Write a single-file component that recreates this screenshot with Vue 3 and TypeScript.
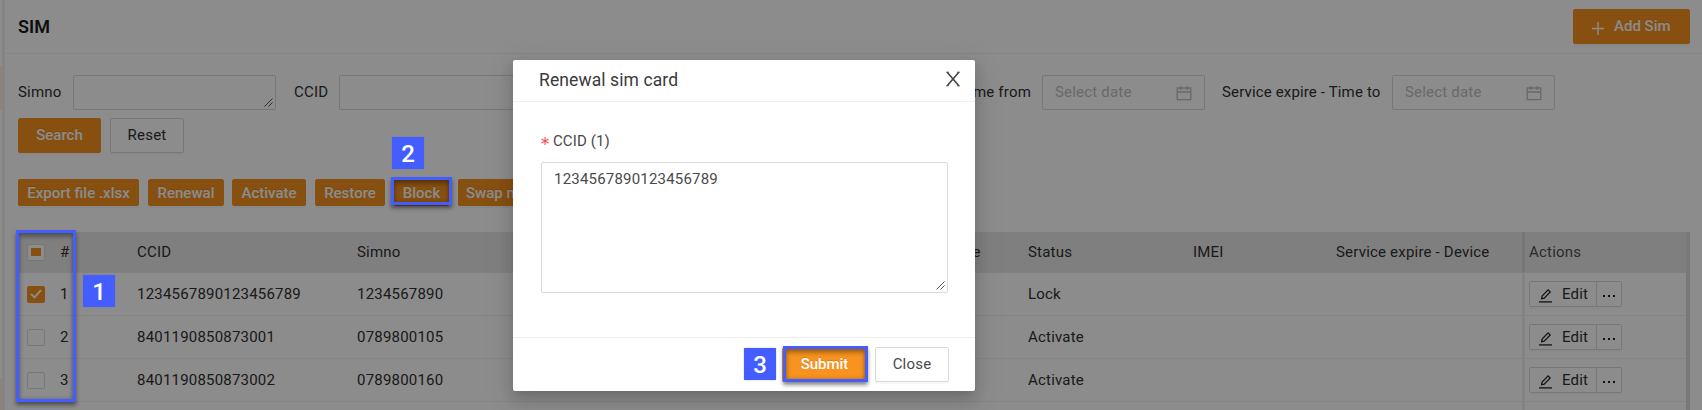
<script setup lang="ts">
interface SimRow {
  id: number
  ccid: string
  simno: string
  status: string
  checked: boolean
}

const bulkActions = [
  { label: 'Export file .xlsx', cls: 'b-export' },
  { label: 'Renewal', cls: 'b-renewal' },
  { label: 'Activate', cls: 'b-activate' },
  { label: 'Restore', cls: 'b-restore' },
  { label: 'Block', cls: 'b-block' },
  { label: 'Swap number', cls: 'b-swap' },
]

const rows: SimRow[] = [
  { id: 1, ccid: '1234567890123456789', simno: '1234567890', status: 'Lock', checked: true },
  { id: 2, ccid: '8401190850873001', simno: '0789800105', status: 'Activate', checked: false },
  { id: 3, ccid: '8401190850873002', simno: '0789800160', status: 'Activate', checked: false },
]
</script>

<template>
  <div class="screen">
    <aside class="rail"><i class="rail-active"></i><i class="rail-next"></i></aside>
    <main class="page">
      <header class="page-head">
        <h1>SIM</h1>
        <button class="btn primary add">
          <svg width="12" height="13" viewBox="0 0 12 13"><path d="M6 0v13M0 6.5h12" stroke="currentColor" stroke-width="1.4" /></svg>
          <span>Add Sim</span>
        </button>
      </header>

      <section class="filters">
        <label class="l-simno">Simno</label>
        <div class="field f-simno">
          <svg class="grip" width="9" height="9" viewBox="0 0 9 9"><path d="M.5 8.5l8-8M4.5 8.5l4-4" /></svg>
        </div>
        <label class="l-ccid">CCID</label>
        <div class="field f-ccid"></div>
        <label class="l-from">Service expire - Time from</label>
        <div class="field date"><span>Select date</span>
          <svg width="16" height="16" viewBox="0 0 16 16"><path d="M1.2 3h13.6v11.6H1.2zM1.2 7h13.6M4.8 1v4M11.2 1v4" /></svg>
        </div>
        <label class="l-to">Service expire - Time to</label>
        <div class="field date"><span>Select date</span>
          <svg width="16" height="16" viewBox="0 0 16 16"><path d="M1.2 3h13.6v11.6H1.2zM1.2 7h13.6M4.8 1v4M11.2 1v4" /></svg>
        </div>
      </section>

      <section class="search-row">
        <button class="btn primary search">Search</button>
        <button class="btn reset">Reset</button>
      </section>

      <section class="bulk">
        <button v-for="a in bulkActions" :key="a.label" class="btn primary small" :class="a.cls">{{ a.label }}</button>
      </section>

      <section class="table">
        <div class="tr th">
          <div class="c-check"><span class="box half"></span></div>
          <div>#</div><div>CCID</div><div>Simno</div><div class="c-type">Device type</div>
          <div>Status</div><div>IMEI</div><div>Service expire - Device</div>
          <div class="c-act head">Actions</div>
        </div>
        <div v-for="r in rows" :key="r.id" class="tr">
          <div class="c-check">
            <span class="box" :class="{ on: r.checked }">
              <svg v-if="r.checked" width="12" height="10" viewBox="0 0 12 10"><path d="M1 4.9l3.5 3.5L11 1.2" fill="none" stroke="#fff" stroke-width="2" /></svg>
            </span>
          </div>
          <div>{{ r.id }}</div><div>{{ r.ccid }}</div><div>{{ r.simno }}</div><div></div>
          <div>{{ r.status }}</div><div></div><div></div>
          <div class="c-act">
            <div class="group">
              <button class="edit">
                <svg width="15" height="15" viewBox="0 0 15 15"><path d="M1 13.9h13" stroke-width="1.3" /><path d="M3.6 10.7l.5-2.7 6-6.1 2.1 2.1-6 6.1z" stroke-width="1.2" /></svg>
                <span>Edit</span>
              </button>
              <button class="more"><i></i><i></i><i></i></button>
            </div>
          </div>
        </div>
        <div class="tr tail"><div></div><div></div><div></div><div></div><div></div><div></div><div></div><div></div><div class="c-act"></div></div>
      </section>
    </main>

    <div class="mask"></div>

    <div class="modal" role="dialog">
      <header class="modal-head">
        <h2>Renewal sim card</h2>
        <svg width="14" height="16" viewBox="0 0 14 16"><path d="M1.2 1.2l11.6 13.6M12.8 1.2l-11.6 13.6" stroke="#444" stroke-width="1.6" /><path d="M0 1.2h3M11 1.2h3M0 14.8h3M11 14.8h3" stroke="#444" stroke-width=".8" /></svg>
      </header>
      <div class="modal-body">
        <div class="modal-label">
          <svg width="8" height="8" viewBox="0 0 8 8"><path d="M4 0v8M.5 2l7 4M7.5 2l-7 4" stroke="#ff4d4f" stroke-width="1.1" /></svg>
          <span>CCID (1)</span>
        </div>
        <div class="area">1234567890123456789
          <svg class="grip" width="9" height="9" viewBox="0 0 9 9"><path d="M.5 8.5l8-8M4.5 8.5l4-4" /></svg>
        </div>
      </div>
      <footer class="modal-foot">
        <button class="btn primary submit">Submit</button>
        <button class="btn close">Close</button>
      </footer>
    </div>

    <div class="mark mark-1"></div>
    <div class="mark mark-2"></div>
    <div class="mark mark-3"></div>
    <div class="tag tag-1">1</div>
    <div class="tag tag-2">2</div>
    <div class="tag tag-3">3</div>
  </div>
</template>

<style>
body { margin: 0; overflow: hidden; }
</style>

<style scoped>
* { box-sizing: border-box; }
.screen {
  position: relative;
  width: 1702px;
  height: 410px;
  overflow: hidden;
  display: flex;
  background: #fff;
  color: #303030;
  font: 15px/24px Roboto, sans-serif;
  letter-spacing: .2px;
}
.rail { width: 5px; border-right: 3px solid #f0f0f0; background: #fff; display: flex; flex-direction: column; }
.rail i { width: 2px; background: #ffefdc; }
.rail-active { height: 44px; margin-top: 66px; }
.rail-next { height: 32px; margin-top: 268px; }
.page { width: 1697px; flex: none; }
.page-head {
  height: 54px;
  display: flex;
  justify-content: space-between;
  padding: 9px 12px 0 13px;
  border-bottom: 1px solid #f0f0f0;
}
h1 { margin: 0; font-size: 18px; line-height: 36px; font-weight: 600; letter-spacing: 0; color: #1a1a1a; }
button { font: inherit; letter-spacing: inherit; margin: 0; padding: 0; color: inherit; background: #fff; }
.btn {
  height: 35px;
  flex: none;
  border: 1px solid #d9d9d9;
  border-radius: 2px;
  text-align: center;
  line-height: 33px;
  box-shadow: 0 2px 0 rgba(0, 0, 0, .03);
  white-space: nowrap;
}
.primary { color: #fff; background: #f7931e; border-color: #f7931e; text-shadow: 0 -1px 0 rgba(0, 0, 0, .12); font-weight: 500; letter-spacing: 0; }
.add { width: 117px; display: flex; align-items: center; gap: 10px; padding-left: 18px; }
.add svg { margin-top: 3px; }
.filters { display: flex; align-items: center; height: 35px; margin: 21px 0 0 13px; }
label { white-space: nowrap; flex: none; margin-top: -1px; }
.l-simno { width: 55px; }
.field { position: relative; height: 35px; flex: none; border: 1px solid #d9d9d9; border-radius: 2px; }
.f-simno { width: 203px; margin-right: 18px; }
.l-ccid { width: 45px; }
.f-ccid { width: 203px; }
.l-from { width: 500px; text-align: right; padding-right: 11px; }
.date { width: 163px; display: flex; justify-content: space-between; align-items: center; padding: 0 12px; color: #bfbfbf; }
.date span { margin-top: -1px; }
.date svg { fill: none; stroke: #bfbfbf; stroke-width: 1.3; margin-top: 1px; }
.l-to { width: 187px; padding-left: 17px; letter-spacing: .15px; }
.grip { position: absolute; right: 2px; bottom: 2px; fill: none; stroke: #555; stroke-width: 1; }
.search-row { display: flex; gap: 9px; margin: 8px 0 0 13px; }
.search { width: 83px; }
.reset { width: 74px; }
.bulk { display: flex; margin: 26px 0 0 13px; height: 27px; }
.small { height: 27px; line-height: 26px; }
.b-export { width: 121px; margin-right: 9px; }
.b-renewal { width: 76px; margin-right: 8px; }
.b-activate { width: 74px; margin-right: 9px; }
.b-restore { width: 70px; margin-right: 9px; }
.b-block { width: 55px; margin-right: 9px; }
.b-swap { width: 108px; }
.table { width: 1672px; margin: 26px 0 0 13px; border-right: 4px solid #dcdcdc; }
.tr {
  display: grid;
  grid-template-columns: 42px 77px 220px 460px 211px 165px 143px 186px 164px;
  height: 43px;
  line-height: 42px;
  border-bottom: 1px solid #f0f0f0;
  white-space: nowrap;
}
.th { height: 41px; line-height: 40px; background: #e8e8e8; border-bottom-color: #ececec; }
.th .c-type { padding-left: 85px; }
.tail { border: 0; height: 10px; }
.c-act { border-left: 3px solid #efefef; padding-left: 4px; height: 100%; }
.c-act.head { border-left-color: #d8d8d8; color: #505050; padding-left: 4px; }
.c-check { display: flex; align-items: center; padding-left: 9px; }
.box { width: 18px; height: 17px; border: 1px solid #d9d9d9; border-radius: 2px; background: #fff; display: flex; align-items: center; justify-content: center; }
.half::before { content: ''; width: 10px; height: 8px; background: #f7931e; }
.on { background: #f7931e; border-color: #f7931e; }
.group { display: flex; margin-top: 8px; width: 93px; height: 26px; border: 1px solid #d9d9d9; border-radius: 2px; box-shadow: 0 2px 0 rgba(0, 0, 0, .02); }
.edit, .more { border: 0; display: flex; align-items: center; }
.edit { width: 67px; padding-left: 8px; gap: 9px; line-height: 24px; border-right: 1px solid #d9d9d9; }
.edit svg { fill: none; stroke: #222; margin-top: 3px; }
.more { flex: 1; justify-content: center; gap: 3px; }
.more i { width: 2px; height: 2px; background: #222; margin-top: 3px; }
.mask { position: absolute; inset: 0; background: rgba(0, 0, 0, .45); }
.modal {
  position: absolute;
  left: 513px;
  top: 60px;
  width: 462px;
  height: 331px;
  background: #fff;
  border-radius: 2px;
  box-shadow: 0 3px 6px -4px rgba(0, 0, 0, .12), 0 6px 16px rgba(0, 0, 0, .08), 0 9px 28px 8px rgba(0, 0, 0, .05), 0 8px 14px rgba(0, 0, 0, .1);
  color: #4a4a4a;
  display: flex;
  flex-direction: column;
}
.modal-head { height: 42px; flex: none; border-bottom: 1px solid #f0f0f0; display: flex; justify-content: space-between; padding: 0 15px 0 26px; }
.modal-head svg { margin-top: 11px; }
h2 { margin: 0; font-weight: 400; font-size: 17.5px; line-height: 40px; letter-spacing: .1px; color: #3a3a3a; }
.modal-body { flex: 1; padding: 27px 27px 0 28px; }
.modal-label { display: flex; align-items: center; gap: 4px; height: 24px; letter-spacing: .1px; }
.area { position: relative; margin-top: 9px; width: 407px; height: 131px; border: 1px solid #d9d9d9; border-radius: 2px; padding: 4px 12px; }
.modal-foot { height: 54px; border-top: 1px solid #f0f0f0; display: flex; justify-content: flex-end; gap: 8px; padding: 9px 26px 0 0; }
.submit { width: 85px; }
.close { width: 74px; }
.mark { position: absolute; border: 3px solid #435dff; box-shadow: 0 3px 4px rgba(0, 0, 0, .45), inset 0 4px 4px rgba(0, 0, 0, .28), inset 0 0 4px rgba(0, 0, 0, .25); }
.mark-1 { left: 16px; top: 230px; width: 60px; height: 172px; }
.mark-2 { left: 391px; top: 177px; width: 61px; height: 28px; }
.mark-3 { left: 783px; top: 346px; width: 85px; height: 36px; }
.tag { position: absolute; width: 32px; height: 32px; background: #435dff; border-radius: 1px; color: #fff; text-align: center; font: 500 24px/34px Roboto, sans-serif; letter-spacing: 0; box-shadow: 0 0 1px #435dff; }
.tag-1 { left: 83px; top: 275px; }
.tag-2 { left: 392px; top: 137px; }
.tag-3 { left: 744px; top: 348px; }
</style>
